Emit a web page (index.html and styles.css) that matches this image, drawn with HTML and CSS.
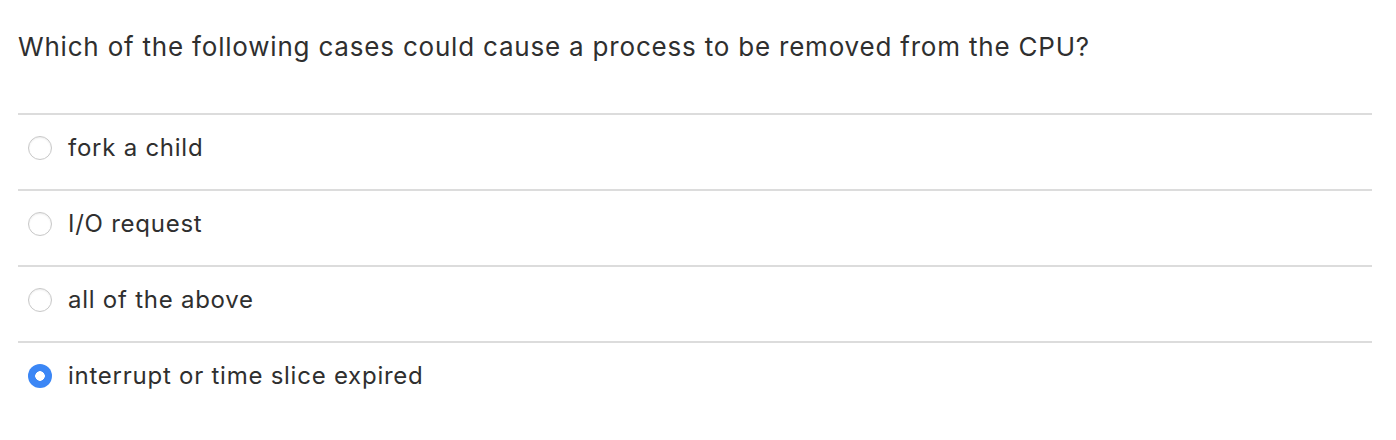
FILE: index.html
```html
<!DOCTYPE html>
<html>
<head>
<meta charset="utf-8">
<link rel="stylesheet" href="styles.css">
</head>
<body>
<div class="quiz">
  <div class="question">Which of the following cases could cause a process to be removed from the CPU?</div>
  <ul class="options">
    <li class="option"><span class="radio"></span><span class="label">fork a child</span></li>
    <li class="option"><span class="radio"></span><span class="label">I/O request</span></li>
    <li class="option"><span class="radio"></span><span class="label">all of the above</span></li>
    <li class="option"><span class="radio checked"></span><span class="label">interrupt or time slice expired</span></li>
  </ul>
</div>
</body>
</html>
```
FILE: styles.css
```css
html, body {
  margin: 0;
  padding: 0;
  background: #ffffff;
}
.quiz {
  padding: 0 24px 0 18px;
  font-family: "Inter", "Lato", sans-serif;
  color: #2f2f2f;
}
.question {
  height: 113px;
  box-sizing: border-box;
  padding-top: 30px;
  font-size: 26px;
  letter-spacing: 0.8px;
  line-height: 34px;
}
.options {
  list-style: none;
  margin: 0;
  padding: 0;
}
.option {
  display: flex;
  align-items: center;
  height: 74px;
  border-top: 2px solid #dcdcdc;
  font-size: 24px;
  letter-spacing: 0.75px;
}
.radio {
  width: 22px;
  height: 22px;
  border: 1px solid #c8c8c8;
  border-radius: 50%;
  margin-left: 10px;
  margin-right: 16px;
  box-shadow: inset 0 1px 2px rgba(0,0,0,0.08);
  flex: none;
  position: relative;
  top: -4px;
}
.radio.checked {
  width: 24px;
  height: 24px;
  border: none;
  background: radial-gradient(circle, #ffffff 0 4.5px, #3b86f5 5px);
  box-shadow: none;
}
.label {
  line-height: 30px;
  position: relative;
  top: -4px;
}
```
